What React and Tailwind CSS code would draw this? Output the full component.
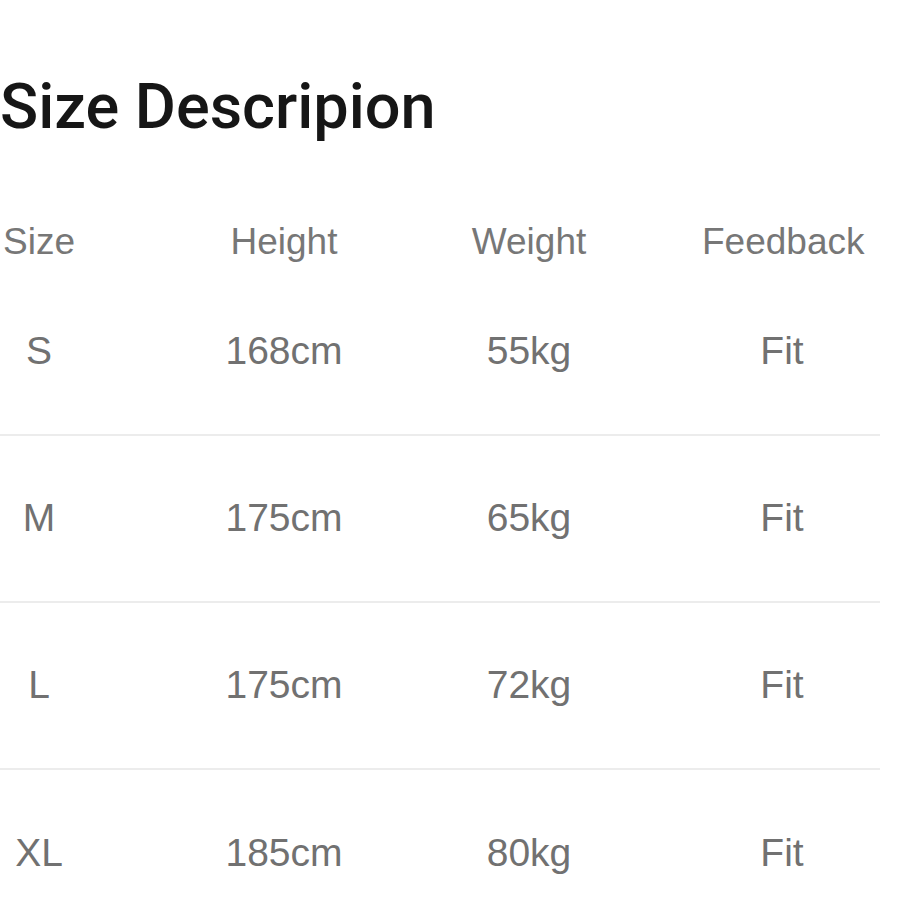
import React from 'react';

const rows = [
  { size: 'S', height: '168cm', weight: '55kg', feedback: 'Fit' },
  { size: 'M', height: '175cm', weight: '65kg', feedback: 'Fit' },
  { size: 'L', height: '175cm', weight: '72kg', feedback: 'Fit' },
  { size: 'XL', height: '185cm', weight: '80kg', feedback: 'Fit' },
];

const Row = ({ cells, className }) => (
  <div className={`flex items-center ${className}`}>
    <div className="w-[78px] text-center whitespace-nowrap">{cells[0]}</div>
    <div className="ml-[126px] w-[160px] text-center whitespace-nowrap">{cells[1]}</div>
    <div className="ml-[85px] w-[160px] text-center whitespace-nowrap">{cells[2]}</div>
    <div className="ml-[93px] w-[160px] text-center whitespace-nowrap">{cells[3]}</div>
  </div>
);

const App = () => {
  return (
    <div className="w-[920px] h-[920px] bg-white overflow-hidden font-['Liberation_Sans',Arial,sans-serif]">
      <h1 className="pt-[72px] h-[215px] text-[63px] leading-[70px] font-medium text-[#161616] font-['Roboto',sans-serif]">
        Size Descripion
      </h1>

      <div className="w-[880px]">
        <Row
          cells={['Size', 'Height', 'Weight', 'Feedback']}
          className="h-[54px] text-[37px] text-[#777777]"
        />
        {rows.map((row, i) => (
          <Row
            key={row.size}
            cells={[row.size, row.height, row.weight, row.feedback]}
            className={`h-[167px] text-[39px] text-[#717171] ${i < rows.length - 1 ? 'border-b-2 border-[#ececec]' : ''}`}
          />
        ))}
      </div>
    </div>
  );
};

export default App;
